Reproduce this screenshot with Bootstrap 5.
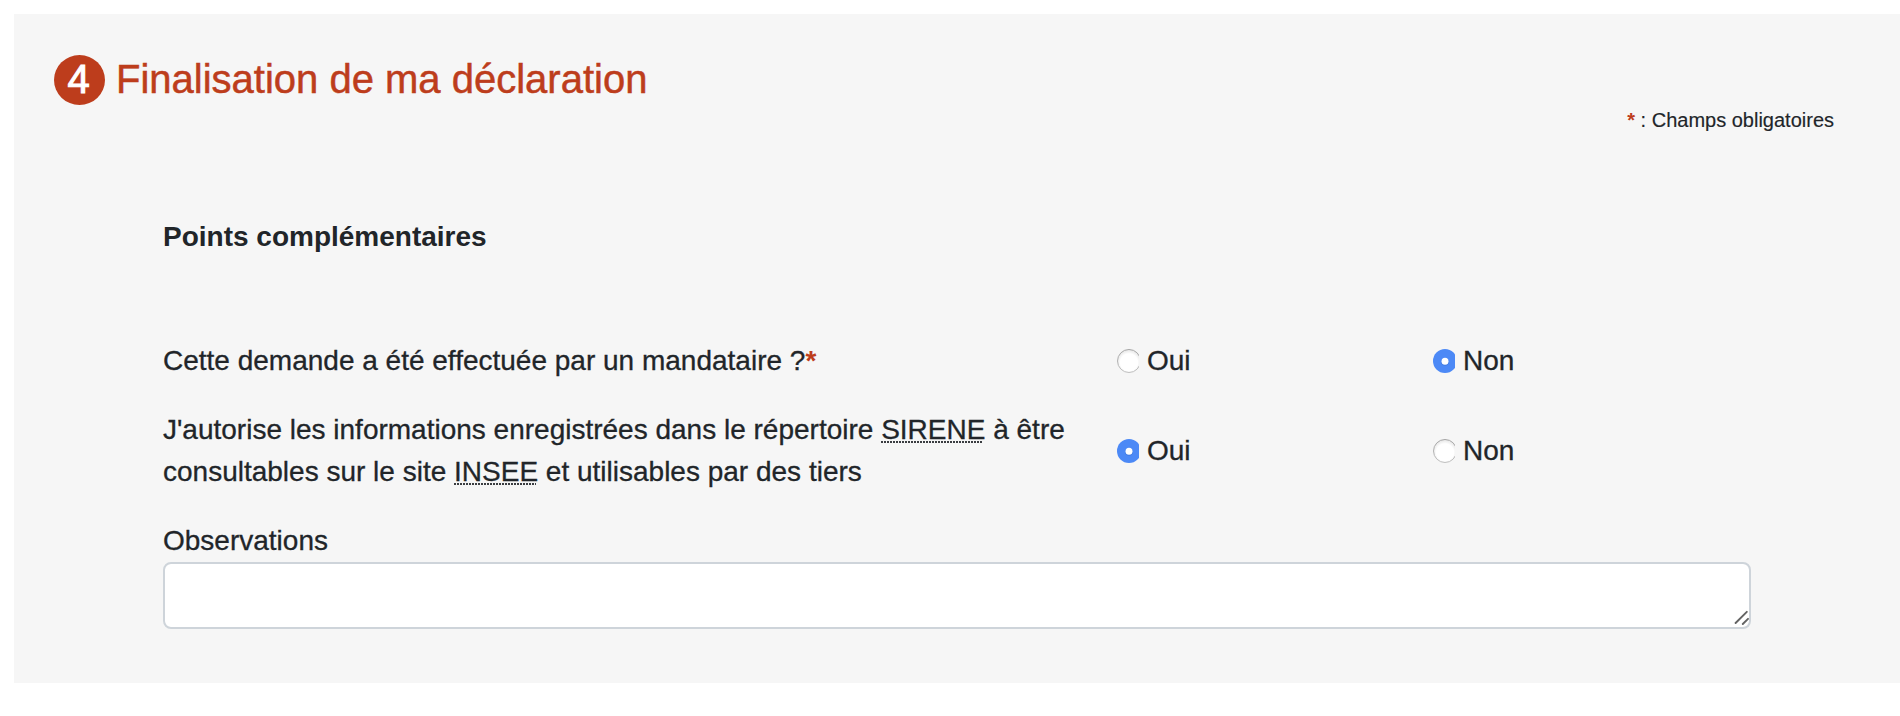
<!DOCTYPE html>
<html lang="fr">
<head>
<meta charset="utf-8">
<meta name="viewport" content="width=device-width, initial-scale=1">
<title>Finalisation de ma déclaration</title>
<link href="https://cdn.jsdelivr.net/npm/bootstrap@5.3.0/dist/css/bootstrap.min.css" rel="stylesheet">
<style>
body{font-family:"Liberation Sans",Arial,sans-serif;font-size:28px;line-height:42px;color:#212529;background:#fff;overflow:hidden;-webkit-text-stroke:.3px}
.step-panel{background:#f6f6f6;margin:14px 0 0 14px;height:669px;padding:41px 66px 0 40px}
.step-title{color:#bd3d1c;font-size:40px;line-height:48px;height:50px;gap:11px;-webkit-text-stroke:.5px}
.step-num{width:51px;height:50px;background:#bd3d1c;color:#fff;font-size:40px;padding:0 2px 2px 0;-webkit-text-stroke:1px}
.title-text{padding-bottom:2px}
.required-note{font-size:20px;line-height:30px;-webkit-text-stroke:.15px}
.req{color:#bd3d1c;font-weight:700;-webkit-text-stroke:0}
.form-zone{padding:81px 83px 0 109px}
.section-title{font-size:28px;line-height:42px;margin-bottom:82px;-webkit-text-stroke:0}
.q-row{display:grid;grid-template-columns:954px 316px 1fr;margin-bottom:27px}
.q-text{width:920px}
abbr[title]{text-decoration:none;cursor:help;background:repeating-linear-gradient(90deg,#3a3d41 0 2px,transparent 2px 3px) 0 calc(100% - 2px)/calc(100% - 2px) 2px no-repeat}
.radio-clip{width:22px;height:24px;overflow:hidden;flex:none;margin-right:8px}
.radio-clip svg{display:block}
.obs-box{height:67px;border:2px solid #ced4da;border-radius:8px;resize:none;padding:12px 24px}
.obs-box:focus{box-shadow:none}
.grip{right:2px;bottom:4px;pointer-events:none}
</style>
</head>
<body>
<svg width="0" height="0" class="position-absolute" aria-hidden="true">
  <defs>
    <radialGradient id="well" cx=".5" cy=".56" r=".5"><stop offset=".75" stop-color="#fff"/><stop offset="1" stop-color="#ececec"/></radialGradient>
    <linearGradient id="rim" x1="0" y1="0" x2="0" y2="1"><stop offset="0" stop-color="#a4a4a4"/><stop offset="1" stop-color="#c0c0c0"/></linearGradient>
    <g id="radio-off"><circle cx="12" cy="12" r="11.5" fill="url(#well)" stroke="url(#rim)"/></g>
    <g id="radio-on"><circle cx="12" cy="12" r="12" fill="#4c89f6"/><circle cx="12" cy="13" r="3.8" fill="#356dcc" opacity=".5"/><circle cx="12" cy="12.2" r="3.5" fill="#fff"/></g>
  </defs>
</svg>
<main class="step-panel">
  <h1 class="step-title d-flex align-items-center mb-0 fw-normal">
    <span class="step-num rounded-circle d-flex align-items-center justify-content-center">4</span>
    <span class="title-text">Finalisation de ma déclaration</span>
  </h1>
  <p class="required-note text-end mb-0"><span class="req">*</span> : Champs obligatoires</p>
  <form class="form-zone">
    <h2 class="section-title fw-bold">Points complémentaires</h2>
    <div class="q-row align-items-center">
      <div class="q-text">Cette demande a été effectuée par un mandataire ?<span class="req">*</span></div>
      <label class="d-flex align-items-center"><span class="radio-clip"><svg width="24" height="24"><use href="#radio-off"/></svg></span>Oui</label>
      <label class="d-flex align-items-center"><span class="radio-clip"><svg width="24" height="24"><use href="#radio-on"/></svg></span>Non</label>
    </div>
    <div class="q-row align-items-center">
      <div class="q-text">J'autorise les informations enregistrées dans le répertoire <abbr title="SIRENE">SIRENE</abbr> à être consultables sur le site <abbr title="INSEE">INSEE</abbr> et utilisables par des tiers</div>
      <label class="d-flex align-items-center"><span class="radio-clip"><svg width="24" height="24"><use href="#radio-on"/></svg></span>Oui</label>
      <label class="d-flex align-items-center"><span class="radio-clip"><svg width="24" height="24"><use href="#radio-off"/></svg></span>Non</label>
    </div>
    <label class="d-block" for="observations">Observations</label>
    <div class="position-relative">
      <textarea class="form-control obs-box" id="observations" rows="1"></textarea>
      <svg class="grip position-absolute" width="15" height="15" viewBox="0 0 15 15" stroke="#636363" stroke-width="1.9" stroke-linecap="round"><path d="M1.6 13L12.8 1.8M8.8 14L14 8.8"/></svg>
    </div>
  </form>
</main>
<script src="https://cdn.jsdelivr.net/npm/bootstrap@5.3.0/dist/js/bootstrap.bundle.min.js"></script>
</body>
</html>
